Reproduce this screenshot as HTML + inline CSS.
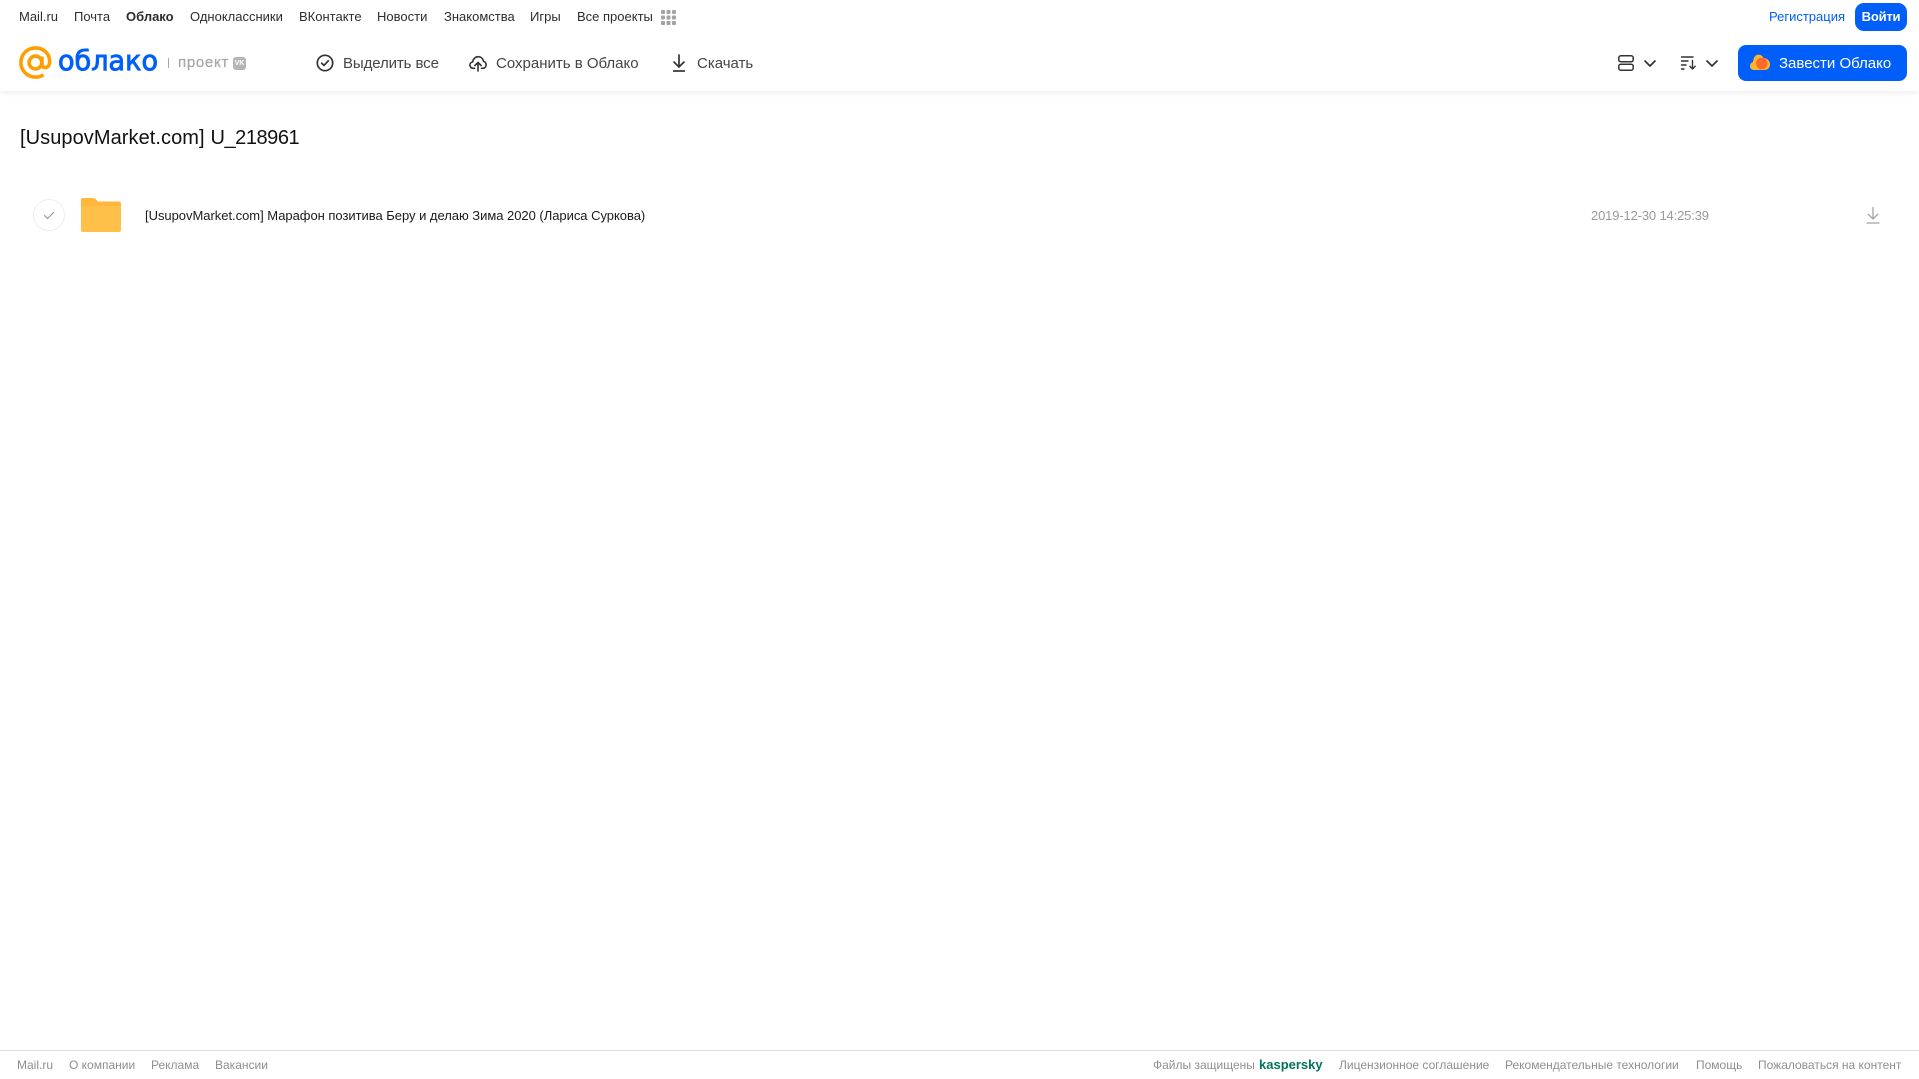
<!DOCTYPE html>
<html lang="ru">
<head>
<meta charset="utf-8">
<title>Облако</title>
<style>
html,body{margin:0;padding:0;background:#fff;}
body{width:1919px;height:1079px;position:relative;overflow:hidden;font-family:"Liberation Sans",Arial,sans-serif;color:#2c2d2e;}
.t{position:absolute;white-space:nowrap;line-height:20px;}
.n{top:7px;font-size:13px;color:#2c2d2e;}
.b{top:54px;font-size:15px;color:#444;}
.f{top:1055px;font-size:12px;color:#8f8f8f;}
svg{position:absolute;overflow:visible;}
#hdr{position:absolute;left:0;top:0;width:1919px;height:91px;background:#fff;box-shadow:0 1px 6px rgba(0,0,0,.09);}
</style>
</head>
<body>
<div id="hdr"></div>

<span class="t n" style="left:19px">Mail.ru</span>
<span class="t n" style="left:74px">Почта</span>
<span class="t n" style="left:126px;font-weight:bold">Облако</span>
<span class="t n" style="left:190px">Одноклассники</span>
<span class="t n" style="left:299px">ВКонтакте</span>
<span class="t n" style="left:377px">Новости</span>
<span class="t n" style="left:444px">Знакомства</span>
<span class="t n" style="left:530px">Игры</span>
<span class="t n" style="left:577px">Все проекты</span>
<svg style="left:661px;top:10px" width="15" height="15" viewBox="0 0 15 15" fill="#a3a3a3">
<rect x="0" y="0" width="4" height="4" rx="1"/><rect x="5.500" y="0" width="4" height="4" rx="1"/><rect x="11" y="0" width="4" height="4" rx="1"/>
<rect x="0" y="5.500" width="4" height="4" rx="1"/><rect x="5.500" y="5.500" width="4" height="4" rx="1"/><rect x="11" y="5.500" width="4" height="4" rx="1"/>
<rect x="0" y="11" width="4" height="4" rx="1"/><rect x="5.500" y="11" width="4" height="4" rx="1"/><rect x="11" y="11" width="4" height="4" rx="1"/>
</svg>

<span class="t n" style="left:1769px;color:#005ff9">Регистрация</span>
<div style="position:absolute;left:1855px;top:3px;width:52px;height:28px;border-radius:9px;background:#005ff9;color:#fff;font-size:13px;font-weight:bold;letter-spacing:-.2px;line-height:27px;text-align:center">Войти</div>

<!-- logo -->
<svg style="left:19px;top:46px" width="33" height="33" viewBox="0 0 33 33" fill="none" stroke="#ff9e00" stroke-width="3.600">
<circle cx="16.500" cy="16.500" r="6.400"/>
<path d="M22.900 10.500V18.500C22.900 22.500 29.600 22.800 30.500 17.500C31.800 8.500 25 1.900 16.500 1.900C8.300 1.900 1.900 8.300 1.900 16.500C1.900 24.700 8.300 31.100 16.500 31.100C19.700 31.100 22.300 30.300 24.500 28.800"/>
</svg>
<svg style="left:57px;top:44px" width="104" height="36">
<text x="1" y="26" font-family="DejaVu Sans" font-size="28" fill="#005ff9" stroke="#005ff9" stroke-width=".9" textLength="100" lengthAdjust="spacingAndGlyphs">облако</text>
</svg>
<div style="position:absolute;left:168px;top:58px;width:1px;height:10px;background:#a8a8a8"></div>
<span class="t" style="left:178px;top:53px;font-size:15px;color:#a8a8a8;letter-spacing:.7px;-webkit-text-stroke:.3px #a8a8a8">проект</span>
<div style="position:absolute;left:233px;top:57px;width:13px;height:13px;border-radius:3px;background:#b5b5b5;color:#fff;font-size:7px;font-weight:bold;line-height:13px;text-align:center">VK</div>

<!-- toolbar -->
<svg style="left:316px;top:54px" width="18" height="18" viewBox="0 0 18 18" fill="none" stroke="#333" stroke-width="1.700" stroke-linecap="round" stroke-linejoin="round">
<circle cx="9" cy="9" r="7.700"/><path d="M5.700 9.200L8 11.400L12.300 6.800"/>
</svg>
<span class="t b" style="left:343px;letter-spacing:-.1px">Выделить все</span>
<svg style="left:469px;top:54px" width="18" height="18" viewBox="0 0 18 18" fill="none" stroke="#333" stroke-width="1.600" stroke-linecap="round" stroke-linejoin="round">
<path d="M5.500 14.300H4.200C2.300 14.300 .9 12.900 .9 11.100C.9 9.500 2 8.200 3.600 8C4.100 4.900 6.300 2.700 9.200 2.700C12 2.700 14 4.600 14.500 7.300C16 7.600 17.100 9 17.100 10.800C17.100 12.800 15.700 14.300 13.800 14.300H12.500"/>
<path d="M9 17V8.500M5.900 11.500L9 8.400L12.100 11.500"/>
</svg>
<span class="t b" style="left:496px">Сохранить в Облако</span>
<svg style="left:671px;top:54px" width="16" height="18" viewBox="0 0 16 18" fill="none" stroke="#333" stroke-width="1.700" stroke-linecap="round" stroke-linejoin="round">
<path d="M8 1V12.500M3 8L8 13L13 8"/><path d="M2 17H14" stroke-linecap="butt"/>
</svg>
<span class="t b" style="left:697px">Скачать</span>

<svg style="left:1618px;top:55px" width="16" height="16" viewBox="0 0 16 16" fill="none" stroke="#333" stroke-width="1.500">
<rect x=".8" y=".8" width="14.400" height="6" rx="2"/><rect x=".8" y="9.200" width="14.400" height="6" rx="2"/>
</svg>
<svg style="left:1644px;top:60px" width="12" height="7" viewBox="0 0 12 7" fill="none" stroke="#333" stroke-width="1.700" stroke-linecap="round" stroke-linejoin="round"><path d="M1 1L6 6L11 1"/></svg>
<svg style="left:1681px;top:56px" width="16" height="14" viewBox="0 0 16 14" fill="none" stroke="#333" stroke-width="1.400" stroke-linecap="round" stroke-linejoin="round">
<path d="M.5 1H12M.5 5H7M.5 9H5M.5 13H3"/><path d="M11.500 4.500V13M8.800 10.300L11.500 13L14.200 10.300"/>
</svg>
<svg style="left:1706px;top:60px" width="12" height="7" viewBox="0 0 12 7" fill="none" stroke="#333" stroke-width="1.700" stroke-linecap="round" stroke-linejoin="round"><path d="M1 1L6 6L11 1"/></svg>

<div style="position:absolute;left:1738px;top:45px;width:169px;height:36px;border-radius:8px;background:#005ff9"></div>
<svg style="left:1750px;top:54px" width="20" height="17" viewBox="0 0 20 17">
<path d="M4 16C1.700 16 0 14.300 0 12C0 10 1.300 8.500 3 8C3.300 3.500 5.500 .6 8.500 .6C11 .6 12.500 2 13.500 4C17 4 20 6.800 20 10.500C20 13.800 17.500 16 14.500 16Z" fill="#ffb52e"/>
<circle cx="11.800" cy="9.500" r="5.800" fill="#ff6a2a"/>
</svg>
<span class="t" style="left:1779px;top:54px;font-size:15px;color:#fff">Завести Облако</span>

<!-- content -->
<span class="t" style="left:20px;top:125px;font-size:20px;line-height:26px;color:#111;letter-spacing:.07px">[UsupovMarket.com]</span>
<span class="t" style="left:210.500px;top:125px;font-size:20px;line-height:26px;color:#111;letter-spacing:-.45px">U_218961</span>

<div style="position:absolute;left:33px;top:199px;width:30px;height:30px;border:1px solid #eee;border-radius:50%"></div>
<svg style="left:43px;top:211px" width="12" height="9" viewBox="0 0 12 9" fill="none" stroke="#9a9a9a" stroke-width="1.200" stroke-linecap="round" stroke-linejoin="round"><path d="M1.500 4.500L4.500 7.500L10.500 1.500"/></svg>

<svg style="left:81px;top:198px" width="40" height="34" viewBox="0 0 40 34">
<path d="M2 0H12C13.500 0 14.500 .8 15.500 2L17 3.500H38C39.200 3.500 40 4.300 40 5.500V8H0V2C0 .8 .8 0 2 0Z" fill="#ffb83d"/>
<path d="M0 8H40V32C40 33.200 39.200 34 38 34H2C.8 34 0 33.200 0 32Z" fill="#ffc04a"/>
</svg>

<span class="t" style="left:145px;top:206px;font-size:13px;color:#1a1a1a;letter-spacing:-.03px">[UsupovMarket.com] Марафон позитива Беру и делаю Зима 2020 (Лариса Суркова)</span>
<span class="t" style="left:1591px;top:206px;font-size:13px;color:#9a9a9a;letter-spacing:-.15px">2019-12-30 14:25:39</span>
<svg style="left:1866px;top:207px" width="14" height="17" viewBox="0 0 14 17" fill="none" stroke="#a3a3a3" stroke-width="1.300">
<path d="M7 0V12M2 7L7 12L12 7"/><path d="M.5 16H13.500"/>
</svg>

<!-- footer -->
<div style="position:absolute;left:0;top:1050px;width:1919px;height:1px;background:#dcdcdc"></div>
<span class="t f" style="left:17px">Mail.ru</span>
<span class="t f" style="left:69px">О компании</span>
<span class="t f" style="left:151px">Реклама</span>
<span class="t f" style="left:215px">Вакансии</span>
<span class="t f" style="left:1153px">Файлы защищены</span>
<span class="t f" style="left:1259px;font-size:13px;font-weight:bold;color:#00745f">kaspersky</span>
<span class="t f" style="left:1339px">Лицензионное соглашение</span>
<span class="t f" style="left:1505px">Рекомендательные технологии</span>
<span class="t f" style="left:1696px">Помощь</span>
<span class="t f" style="left:1758px">Пожаловаться на контент</span>
</body>
</html>
